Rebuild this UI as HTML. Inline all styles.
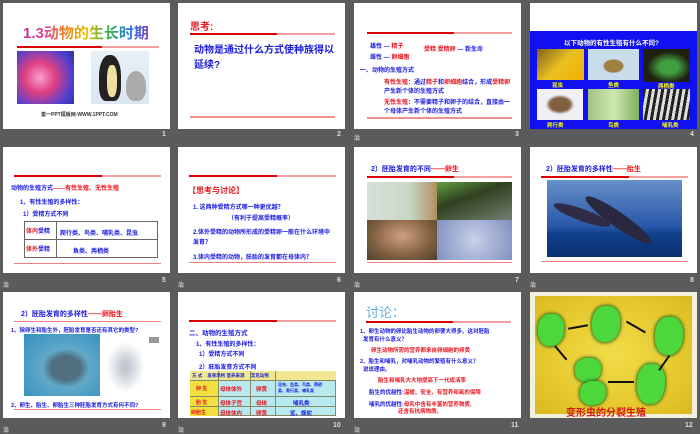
<!DOCTYPE html>
<html><head><meta charset="utf-8"><style>
*{margin:0;padding:0;box-sizing:border-box}
body{width:700px;height:432px;background:#5b5b5b;position:relative;overflow:hidden;font-family:"Liberation Sans","Noto Sans CJK SC",sans-serif;font-weight:bold}
.s{position:absolute;width:167px;height:126px;background:#fff;overflow:hidden}
.s div{position:absolute;white-space:nowrap}
.n{position:absolute;color:#ddd;font-size:7px;font-weight:bold}
.z{position:absolute;color:#ccc;font-size:6px}
.rl{height:2px;background:linear-gradient(90deg,#d00 0,#d00 60%,#f4a0a0 60%)}
.b{color:#1a1ae0}.r{color:#e8141e}
.bl{background:#4cd83c;box-shadow:0 0 3px 1px #2a6a18;border-radius:45% 40% 50% 42%}
.ar{height:1.5px;background:#111}
</style></head><body>

<!-- Slide 1 -->
<div class="s" style="left:3px;top:3px">
<div style="left:20px;top:19px;font-size:15px;background:linear-gradient(90deg,#c03090,#e040a0,#f08020,#e8c000,#40b040,#2080e0,#8040c0);-webkit-background-clip:text;color:transparent">1.3动物的生长时期</div>
<div style="left:14px;top:43px;width:142px" class="rl"></div>
<div style="left:14px;top:48px;width:57px;height:53px;background:radial-gradient(circle at 40% 50%,#f8a0d0,#e04080 35%,#5040d0 75%,#3030a0)"></div>
<div style="left:88px;top:48px;width:58px;height:53px;background:linear-gradient(#e8f0f8,#dce6f0)"></div>
<div style="left:96px;top:52px;width:22px;height:46px;background:#222;border-radius:45% 45% 30% 30%"></div>
<div style="left:104px;top:62px;width:10px;height:32px;background:#f0e0a0;border-radius:40%"></div>
<div style="left:123px;top:68px;width:20px;height:30px;background:#aaa;border-radius:50% 50% 40% 40%"></div>
<div style="left:38px;top:108px;font-size:5px;color:#333">第一PPT模板网-WWW.1PPT.COM</div>
</div>
<div class="n" style="left:162px;top:131px">1</div>

<!-- Slide 2 -->
<div class="s" style="left:178px;top:3px">
<div class="r" style="left:12px;top:15px;font-size:10px">思考:</div>
<div style="left:12px;top:30px;width:145px" class="rl"></div>
<div class="b" style="left:16px;top:40px;font-size:10px;line-height:15px;white-space:normal;width:140px">动物是通过什么方式使种族得以延续?</div>
<div style="left:12px;top:113px;width:145px;height:2px;background:#f09090"></div>
</div>
<div class="n" style="left:337px;top:131px">2</div>

<!-- Slide 3 -->
<div class="s" style="left:354px;top:3px">
<div style="left:13px;top:29px;width:145px" class="rl"></div>
<div class="b" style="left:16px;top:38px;font-size:6px">雄性 —<span class="r"> 精子</span></div>
<div class="b" style="left:16px;top:49px;font-size:6px">雌性 —<span class="r"> 卵细胞</span></div>
<div class="r" style="left:70px;top:41px;font-size:6px">受精 <span>受精卵</span><span class="b"> — 新生命</span></div>
<div class="b" style="left:6px;top:62px;font-size:6px">一、动物的生殖方式</div>
<div class="b" style="left:30px;top:76px;font-size:6px;line-height:9px;white-space:normal;width:130px"><span class="r">有性生殖：</span>通过<span class="r">精子</span>和<span class="r">卵细胞</span>结合，形成<span class="r">受精卵</span>产生新个体的生殖方式</div>
<div class="b" style="left:30px;top:96px;font-size:6px;line-height:9px;white-space:normal;width:130px"><span class="r">无性生殖：</span>不需要精子和卵子的结合，直接由一个母体产生新个体的生殖方式</div>
<div style="left:13px;top:114px;width:145px;height:2px;background:#f09090"></div>
</div>
<div class="z" style="left:354px;top:133px">治</div><div class="n" style="left:515px;top:131px">3</div>

<!-- Slide 4 -->
<div class="s" style="left:530px;top:3px">
<div style="left:0;top:28px;width:167px;height:98px;background:#1010f0"></div>
<div style="left:34px;top:34px;font-size:6.5px;color:#fff">以下动物的有性生殖有什么不同?</div>
<div style="left:7px;top:46px;width:47px;height:31px;background:linear-gradient(135deg,#806020,#e8c020,#f0b000)"></div>
<div style="left:58px;top:46px;width:51px;height:31px;background:radial-gradient(ellipse at 50% 55%,#a08040 25%,#c8dcec 30%)"></div>
<div style="left:113px;top:46px;width:47px;height:33px;background:radial-gradient(ellipse at 55% 55%,#40a040 25%,#202010 60%)"></div>
<div style="left:7px;top:86px;width:46px;height:31px;background:radial-gradient(ellipse,#806040 30%,#f0f0f4 45%)"></div>
<div style="left:58px;top:86px;width:51px;height:31px;background:linear-gradient(90deg,#a0c080,#d0e8b0,#80b060)"></div>
<div style="left:113px;top:86px;width:47px;height:31px;background:repeating-linear-gradient(100deg,#222 0 3px,#ddd 3px 6px)"></div>
<div style="left:22px;top:78px;font-size:5.5px;color:#ff0">昆虫</div>
<div style="left:78px;top:78px;font-size:5.5px;color:#ff0">鱼类</div>
<div style="left:128px;top:79px;font-size:5.5px;color:#ff0">两栖类</div>
<div style="left:17px;top:118px;font-size:5.5px;color:#ff0">爬行类</div>
<div style="left:78px;top:118px;font-size:5.5px;color:#ff0">鸟类</div>
<div style="left:132px;top:118px;font-size:5.5px;color:#ff0">哺乳类</div>
</div>
<div class="n" style="left:690px;top:131px">4</div>

<!-- Slide 5 -->
<div class="s" style="left:3px;top:147px">
<div style="left:11px;top:28px;width:147px" class="rl"></div>
<div class="b" style="left:8px;top:36px;font-size:6px">动物的生殖方式<span class="r">——有性生殖、无性生殖</span></div>
<div class="b" style="left:17px;top:50px;font-size:6px">1、有性生殖的多样性：</div>
<div class="b" style="left:20px;top:62px;font-size:6px">1）受精方式不同</div>
<div style="left:21px;top:74px;width:134px;height:37px;border:1px solid #666"></div>
<div style="left:21px;top:92px;width:134px;height:1px;background:#666"></div>
<div style="left:53px;top:74px;width:1px;height:37px;background:#666"></div>
<div class="r" style="left:23px;top:79px;font-size:6px">体内<span class="b">受精</span></div>
<div class="r" style="left:23px;top:97px;font-size:6px">体外<span class="b">受精</span></div>
<div class="b" style="left:57px;top:81px;font-size:6px">爬行类、鸟类、哺乳类、昆虫</div>
<div class="b" style="left:70px;top:99px;font-size:6px">鱼类、两栖类</div>
<div style="left:11px;top:116px;width:147px;height:1px;background:#f08080"></div>
</div>
<div class="z" style="left:3px;top:280px">治</div><div class="n" style="left:162px;top:277px">5</div>

<!-- Slide 6 -->
<div class="s" style="left:178px;top:147px">
<div style="left:11px;top:28px;width:147px" class="rl"></div>
<div class="r" style="left:10px;top:38px;font-size:8px">【思考与讨论】</div>
<div class="b" style="left:15px;top:55px;font-size:6px">1. 这两种受精方式哪一种更优越？</div>
<div class="b" style="left:50px;top:66px;font-size:6px">（有利于提高受精概率）</div>
<div class="b" style="left:15px;top:81px;font-size:6px;line-height:10px;white-space:normal;width:142px">2.体外受精的动物所形成的受精卵一般在什么环境中发育？</div>
<div class="b" style="left:15px;top:105px;font-size:6px">3.体内受精的动物，胚胎的发育都在母体内？</div>
<div style="left:11px;top:115px;width:147px;height:1px;background:#f08080"></div>
</div>
<div class="z" style="left:178px;top:280px">治</div><div class="n" style="left:337px;top:277px">6</div>

<!-- Slide 7 -->
<div class="s" style="left:354px;top:147px">
<div class="b" style="left:17px;top:17px;font-size:7px">2）胚胎发育的不同<span class="r">——卵生</span></div>
<div style="left:13px;top:29px;width:145px" class="rl"></div>
<div style="left:13px;top:35px;width:70px;height:38px;background:linear-gradient(90deg,#d8e0d8,#c8d8c8 60%,#b09060)"></div>
<div style="left:83px;top:35px;width:75px;height:38px;background:linear-gradient(160deg,#60a040,#304020 40%,#708070)"></div>
<div style="left:13px;top:73px;width:70px;height:40px;background:radial-gradient(ellipse at 50% 40%,#d0a080,#806040 60%,#504030)"></div>
<div style="left:83px;top:73px;width:75px;height:40px;background:radial-gradient(circle at 50% 50%,#c8d0e8,#8090c0)"></div>
<div style="left:13px;top:115px;width:145px;height:1px;background:#f08080"></div>
</div>
<div class="z" style="left:354px;top:280px">治</div><div class="n" style="left:515px;top:277px">7</div>

<!-- Slide 8 -->
<div class="s" style="left:530px;top:147px">
<div class="b" style="left:16px;top:17px;font-size:7px">2）胚胎发育的多样性<span class="r">——胎生</span></div>
<div style="left:11px;top:29px;width:147px" class="rl"></div>
<div style="left:17px;top:33px;width:135px;height:77px;background:linear-gradient(#6890c8,#2858a8 60%,#10408c 70%,#0a3070)"></div>
<div style="left:60px;top:44px;width:80px;height:15px;background:#2a2840;border-radius:50%;transform:rotate(35deg);transform-origin:0 0"></div>
<div style="left:22px;top:62px;width:60px;height:12px;background:#302c48;border-radius:50%;transform:rotate(20deg)"></div>
<div style="left:11px;top:114px;width:147px;height:1px;background:#f08080"></div>
</div>
<div class="z" style="left:530px;top:280px">治</div><div class="n" style="left:690px;top:277px">8</div>

<!-- Slide 9 -->
<div class="s" style="left:3px;top:292px">
<div class="b" style="left:18px;top:17px;font-size:7px">2）胚胎发育的多样性<span class="r">——卵胎生</span></div>
<div style="left:11px;top:29px;width:147px;height:1px;background:#f08080"></div>
<div class="b" style="left:8px;top:34px;font-size:5.5px">1、除卵生和胎生外，胚胎发育是否还有其它的类型?</div>
<div style="left:21px;top:42px;width:76px;height:62px;background:radial-gradient(ellipse at 55% 55%,#507080 25%,#60a8c8 40%,#3090c0)"></div>
<div style="left:100px;top:45px;width:45px;height:60px;background:radial-gradient(ellipse,#c0c8d0 10%,#fff 60%)"></div>
<div style="left:146px;top:45px;width:10px;height:6px;background:#999"></div>
<div class="b" style="left:8px;top:109px;font-size:5.5px">2、卵生、胎生、卵胎生三种胚胎发育方式有何不同?</div>
<div style="left:11px;top:117px;width:147px;height:1px;background:#f08080"></div>
</div>
<div class="z" style="left:3px;top:425px">治</div><div class="n" style="left:162px;top:422px">9</div>

<!-- Slide 10 -->
<div class="s" style="left:178px;top:292px">
<div style="left:11px;top:28px;width:147px" class="rl"></div>
<div class="b" style="left:11px;top:35px;font-size:6.5px">二、动物的生殖方式</div>
<div class="b" style="left:18px;top:47px;font-size:6px">1、有性生殖的多样性：</div>
<div class="b" style="left:21px;top:57px;font-size:6px">1）受精方式不同</div>
<div class="b" style="left:21px;top:70px;font-size:6px">2）胚胎发育方式不同</div>
<div style="left:12px;top:79px;width:146px;height:45px;background:#b8e8f0;border:1px solid #886"></div>
<div style="left:12px;top:79px;width:146px;height:9px;background:#f0e890"></div>
<div style="left:12px;top:88px;width:28px;height:36px;background:#f0e040"></div>
<div style="left:12px;top:88px;width:146px;height:1px;background:#886"></div>
<div style="left:12px;top:104px;width:146px;height:1px;background:#886"></div>
<div style="left:12px;top:114px;width:146px;height:1px;background:#886"></div>
<div style="left:40px;top:79px;width:1px;height:45px;background:#886"></div>
<div style="left:72px;top:79px;width:1px;height:45px;background:#886"></div>
<div style="left:97px;top:79px;width:1px;height:45px;background:#886"></div>
<div class="b" style="left:14px;top:81px;font-size:4.5px">方 式 &nbsp;&nbsp;&nbsp;发育场所 营养来源 &nbsp;&nbsp;&nbsp;&nbsp;常见动物</div>
<div class="r" style="left:18px;top:93px;font-size:5px">卵 生</div>
<div class="r" style="left:42px;top:93px;font-size:5.5px">母体体外</div>
<div class="r" style="left:78px;top:93px;font-size:5.5px">卵黄</div>
<div class="b" style="left:100px;top:90px;font-size:4px;line-height:6px">昆虫、鱼类、鸟类、两栖<br>类、爬行类、哺乳类</div>
<div class="r" style="left:18px;top:107px;font-size:5px">胎 生</div>
<div class="r" style="left:42px;top:107px;font-size:5.5px">母体子宫</div>
<div class="r" style="left:78px;top:107px;font-size:5.5px">母体</div>
<div class="b" style="left:115px;top:107px;font-size:5.5px">哺乳类</div>
<div class="r" style="left:13px;top:117px;font-size:5px">卵胎生</div>
<div class="r" style="left:42px;top:117px;font-size:5.5px">母体体内</div>
<div class="r" style="left:78px;top:117px;font-size:5.5px">卵黄</div>
<div class="b" style="left:112px;top:117px;font-size:5.5px">鲨、蝮蛇</div>
</div>
<div class="z" style="left:178px;top:425px">治</div><div class="n" style="left:333px;top:422px">10</div>

<!-- Slide 11 -->
<div class="s" style="left:354px;top:292px">
<div style="left:12px;top:10px;font-size:13px;color:#60b0e8;font-weight:normal">讨论：</div>
<div style="left:12px;top:29px;width:145px" class="rl"></div>
<div class="b" style="left:6px;top:36px;font-size:5.5px;line-height:8px">1、卵生动物的卵比胎生动物的卵要大得多。这对胚胎<br>&nbsp;&nbsp;发育有什么意义？</div>
<div class="r" style="left:17px;top:54px;font-size:5.5px">卵生动物所需的营养都来自卵细胞的卵黄</div>
<div class="b" style="left:6px;top:66px;font-size:5.5px;line-height:8px">2、胎生和哺乳，对哺乳动物的繁殖有什么意义？<br>&nbsp;&nbsp;说说理由。</div>
<div class="r" style="left:24px;top:84px;font-size:5.5px">胎生和哺乳大大地提高下一代成活率</div>
<div class="b" style="left:15px;top:96px;font-size:5.5px">胎生的优越性:<span class="r">温暖、安全、有营养和氧的保障</span></div>
<div class="b" style="left:15px;top:110px;font-size:5.5px;line-height:7px">哺乳的优越性:<span class="r">母乳中含有丰富的营养物质,<br>&nbsp;&nbsp;&nbsp;&nbsp;&nbsp;&nbsp;&nbsp;&nbsp;&nbsp;&nbsp;&nbsp;&nbsp;&nbsp;&nbsp;&nbsp;&nbsp;&nbsp;&nbsp;&nbsp;还含有抗病物质。</span></div>
</div>
<div class="z" style="left:354px;top:425px">治</div><div class="n" style="left:511px;top:422px">11</div>

<!-- Slide 12 -->
<div class="s" style="left:530px;top:292px;background:#f4f0e0">
<div style="left:5px;top:4px;width:157px;height:118px;background:radial-gradient(ellipse,#f2dc48,#e4c62a 70%,#d8b820)"></div>
<div class="bl" style="left:8px;top:22px;width:26px;height:32px"></div>
<div class="bl" style="left:62px;top:14px;width:28px;height:36px"></div>
<div class="bl" style="left:125px;top:25px;width:28px;height:38px"></div>
<div class="bl" style="left:107px;top:72px;width:28px;height:40px"></div>
<div class="bl" style="left:45px;top:66px;width:26px;height:24px"></div>
<div class="bl" style="left:50px;top:89px;width:26px;height:24px"></div>
<div class="ar" style="left:38px;top:34px;width:20px;transform:rotate(-10deg)"></div>
<div class="ar" style="left:95px;top:34px;width:22px;transform:rotate(30deg)"></div>
<div class="ar" style="left:125px;top:70px;width:18px;transform:rotate(-55deg)"></div>
<div class="ar" style="left:78px;top:89px;width:26px"></div>
<div class="ar" style="left:22px;top:60px;width:18px;transform:rotate(50deg)"></div>
<div style="left:36px;top:112px;font-size:10px;color:#d01818">变形虫的分裂生殖</div>
</div>
<div class="n" style="left:685px;top:422px">12</div>

</body></html>
